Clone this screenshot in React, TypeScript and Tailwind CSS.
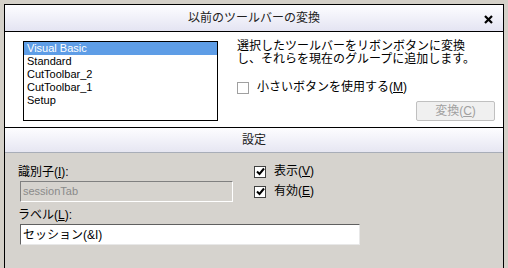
const font = { fontFamily: '"Liberation Sans", "Noto Sans CJK JP", sans-serif' };

const toolbars = ['Visual Basic', 'Standard', 'CutToolbar_2', 'CutToolbar_1', 'Setup'];

function Check({ checked }: { checked: boolean }) {
  return (
    <span
      className={`flex h-[12px] w-[12px] items-center justify-center border bg-white ${
        checked ? 'border-[#404040]' : 'border-[#a0a0a0]'
      }`}
    >
      {checked && (
        <svg width="9" height="9" viewBox="0 0 9 9">
          <path d="M1 4.5 L3.5 7 L8 1.5" fill="none" stroke="#000" strokeWidth="2" />
        </svg>
      )}
    </span>
  );
}

export default function App() {
  return (
    <div
      className="h-[268px] w-[508px] overflow-hidden bg-[#d4d0c8] pl-[4px] pt-[4px] text-[12px] text-black"
      style={font}
    >
      <div className="flex h-[280px] w-[500px] flex-col border border-black bg-[#d6d3ce]">
        {/* title bar */}
        <div className="relative flex h-[27px] items-center justify-center border-b border-black bg-gradient-to-b from-[#fdfdff] to-[#e4e4f2]">
          <span className="text-[12px] text-[#202020]">以前のツールバーの変換</span>
          <svg className="absolute right-[10px] top-[10px]" width="9" height="9" viewBox="0 0 9 9">
            <path d="M1 1 L8 8 M8 1 L1 8" stroke="#000" strokeWidth="2.2" />
          </svg>
        </div>

        {/* upper panel */}
        <div className="flex h-[96px] border-b border-black bg-white pl-[18px] pt-[9px]">
          <div className="flex h-[80px] w-[195px] flex-col border border-black text-[11px] leading-[13px]">
            {toolbars.map((t, i) => (
              <div
                key={t}
                className={`h-[13px] pl-[3px] ${i === 0 ? 'bg-[#5e9de6] text-white' : ''}`}
              >
                {t}
              </div>
            ))}
          </div>
          <div className="flex flex-1 flex-col pl-[19px] pr-[8px]">
            <div className="mt-[-1px] leading-[13px]">
              <div>選択したツールバーをリボンボタンに変換</div>
              <div>し、それらを現在のグループに追加します。</div>
            </div>
            <div className="mt-[15px] flex items-center gap-[8px] leading-[13px]">
              <Check checked={false} />
              <span>小さいボタンを使用する(<u>M</u>)</span>
            </div>
            <div className="mt-[7px] flex justify-end">
              <div className="flex h-[20px] w-[79px] items-center justify-center rounded-[2px] border border-[#c0c0c0] bg-[#f0f0f0] text-[#a0a0a0]">
                変換(<u>C</u>)
              </div>
            </div>
          </div>
        </div>

        {/* section header */}
        <div className="flex h-[25px] items-center justify-center border-b border-[#a8adb8] bg-gradient-to-b from-[#fdfdff] to-[#e6e6f2] text-[#202020]">
          設定
        </div>

        {/* settings */}
        <div className="flex pl-[13px] pt-[12px]">
          <div className="flex w-[340px] flex-col">
            <div className="leading-[14px]">識別子(<u>I</u>):</div>
            <div className="ml-[2px] mt-[2px] flex h-[21px] w-[213px] items-center border border-b-white border-l-[#808080] border-r-white border-t-[#808080] pl-[2px] text-[11px] text-[#8a8a8a]">
              sessionTab
            </div>
            <div className="mt-[6px] leading-[14px]">ラベル(<u>L</u>):</div>
            <div className="ml-[2px] mt-[2px] flex h-[21px] w-[340px] items-center border border-b-[#e8e8e8] border-l-[#606060] border-r-[#e8e8e8] border-t-[#606060] bg-white pl-[2px]">
              セッション(&amp;I)
            </div>
          </div>
          <div className="ml-[-104px] flex flex-col gap-[7px] pt-[0px]">
            <div className="flex items-center gap-[8px] leading-[13px]">
              <Check checked />
              <span>表示(<u>V</u>)</span>
            </div>
            <div className="flex items-center gap-[8px] leading-[13px]">
              <Check checked />
              <span>有効(<u>E</u>)</span>
            </div>
          </div>
        </div>
      </div>
    </div>
  );
}
